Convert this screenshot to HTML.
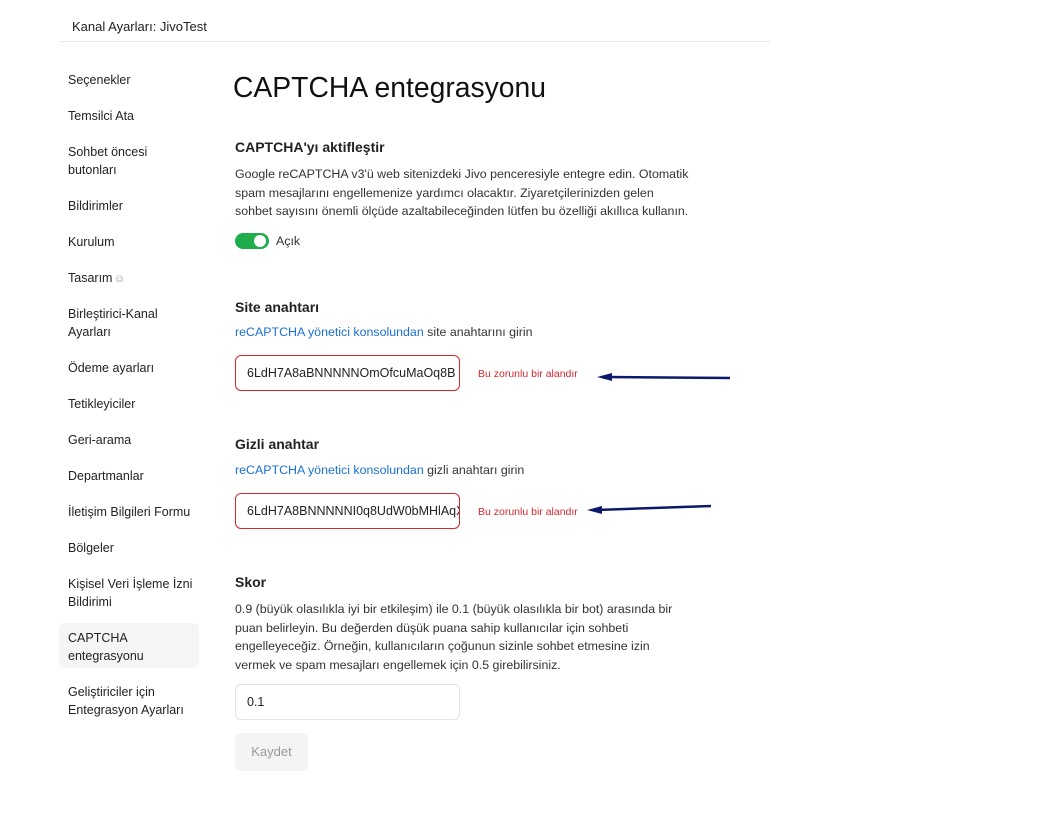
<!DOCTYPE html>
<html><head><meta charset="utf-8"><style>
body{margin:0;width:1041px;height:837px;background:#fff;font-family:"Liberation Sans",sans-serif;color:#222;position:relative;overflow:hidden}
.a{position:absolute;white-space:nowrap}
.s{font-size:12.5px;line-height:18px;left:68px}
.h{font-size:14px;font-weight:bold;left:235px;color:#222}
.p{font-size:12.4px;line-height:18.7px;left:235px;color:#333}
.in{position:absolute;left:235px;width:223px;height:34px;border:1px solid #d9272e;border-radius:6px;font-size:12.5px;line-height:34px;box-sizing:content-box;overflow:hidden;white-space:nowrap}
.in span{padding-left:11px}
.err{font-size:10.5px;color:#d9272e}
a{color:#1a6fd4;text-decoration:none}
</style></head><body>
<div class="a" style="left:72px;top:19px;font-size:13px">Kanal Ayarları: JivoTest</div>
<div class="a" style="left:60px;top:41px;width:710px;height:1px;background:#e6e6e6"></div>
<div class="a" style="left:59px;top:623px;width:140px;height:45px;background:#f4f5f7;border-radius:6px"></div>
<div class="a s" style="top:71px">Seçenekler</div>
<div class="a s" style="top:107px">Temsilci Ata</div>
<div class="a s" style="top:143px">Sohbet öncesi<br>butonları</div>
<div class="a s" style="top:197px">Bildirimler</div>
<div class="a s" style="top:233px">Kurulum</div>
<div class="a s" style="top:269px">Tasarım <span style="color:#bbb;font-size:10px">⧉</span></div>
<div class="a s" style="top:305px">Birleştirici-Kanal<br>Ayarları</div>
<div class="a s" style="top:359px">Ödeme ayarları</div>
<div class="a s" style="top:395px">Tetikleyiciler</div>
<div class="a s" style="top:431px">Geri-arama</div>
<div class="a s" style="top:467px">Departmanlar</div>
<div class="a s" style="top:503px">İletişim Bilgileri Formu</div>
<div class="a s" style="top:539px">Bölgeler</div>
<div class="a s" style="top:575px">Kişisel Veri İşleme İzni<br>Bildirimi</div>
<div class="a s" style="top:629px">CAPTCHA<br>entegrasyonu</div>
<div class="a s" style="top:683px">Geliştiriciler için<br>Entegrasyon Ayarları</div>

<div class="a" style="left:233px;top:71px;font-size:28.3px;color:#111">CAPTCHA entegrasyonu</div>
<div class="a h" style="top:139px">CAPTCHA'yı aktifleştir</div>
<div class="a p" style="top:165px">Google reCAPTCHA v3'ü web sitenizdeki Jivo penceresiyle entegre edin. Otomatik<br>spam mesajlarını engellemenize yardımcı olacaktır. Ziyaretçilerinizden gelen<br>sohbet sayısını önemli ölçüde azaltabileceğinden lütfen bu özelliği akıllıca kullanın.</div>
<div class="a" style="left:235px;top:233px;width:34px;height:16px;border-radius:8px;background:#1fac4b"></div>
<div class="a" style="left:254px;top:235px;width:12px;height:12px;border-radius:6px;background:#fff"></div>
<div class="a p" style="left:276px;top:232px">Açık</div>

<div class="a h" style="top:299px">Site anahtarı</div>
<div class="a p" style="top:323px"><a>reCAPTCHA yönetici konsolundan</a> site anahtarını girin</div>
<div class="in" style="top:355px"><span>6LdH7A8aBNNNNNOmOfcuMaOq8B</span></div>
<div class="a err" style="left:478px;top:368px">Bu zorunlu bir alandır</div>

<div class="a h" style="top:436px">Gizli anahtar</div>
<div class="a p" style="top:461px"><a>reCAPTCHA yönetici konsolundan</a> gizli anahtarı girin</div>
<div class="in" style="top:493px"><span>6LdH7A8BNNNNNI0q8UdW0bMHlAqX</span></div>
<div class="a err" style="left:478px;top:506px">Bu zorunlu bir alandır</div>

<svg class="a" style="left:0;top:0" width="1041" height="837">
<path d="M606 377 L730 378" stroke="#0d1a6b" stroke-width="2.5" fill="none"/>
<path d="M597 377 L612 373 L612 381 Z" fill="#0d1a6b"/>
<path d="M596 510 L711 506" stroke="#0d1a6b" stroke-width="2.5" fill="none"/>
<path d="M587 510 L602 506 L602 514 Z" fill="#0d1a6b"/>
</svg>

<div class="a h" style="top:574px">Skor</div>
<div class="a p" style="top:600px">0.9 (büyük olasılıkla iyi bir etkileşim) ile 0.1 (büyük olasılıkla bir bot) arasında bir<br>puan belirleyin. Bu değerden düşük puana sahip kullanıcılar için sohbeti<br>engelleyeceğiz. Örneğin, kullanıcıların çoğunun sizinle sohbet etmesine izin<br>vermek ve spam mesajları engellemek için 0.5 girebilirsiniz.</div>
<div class="in" style="top:684px;border-color:#e3e3e3"><span>0.1</span></div>
<div class="a" style="left:235px;top:733px;width:73px;height:38px;background:#f3f4f6;border-radius:6px;color:#999;font-size:13px;line-height:38px;text-align:center">Kaydet</div>
</body></html>
